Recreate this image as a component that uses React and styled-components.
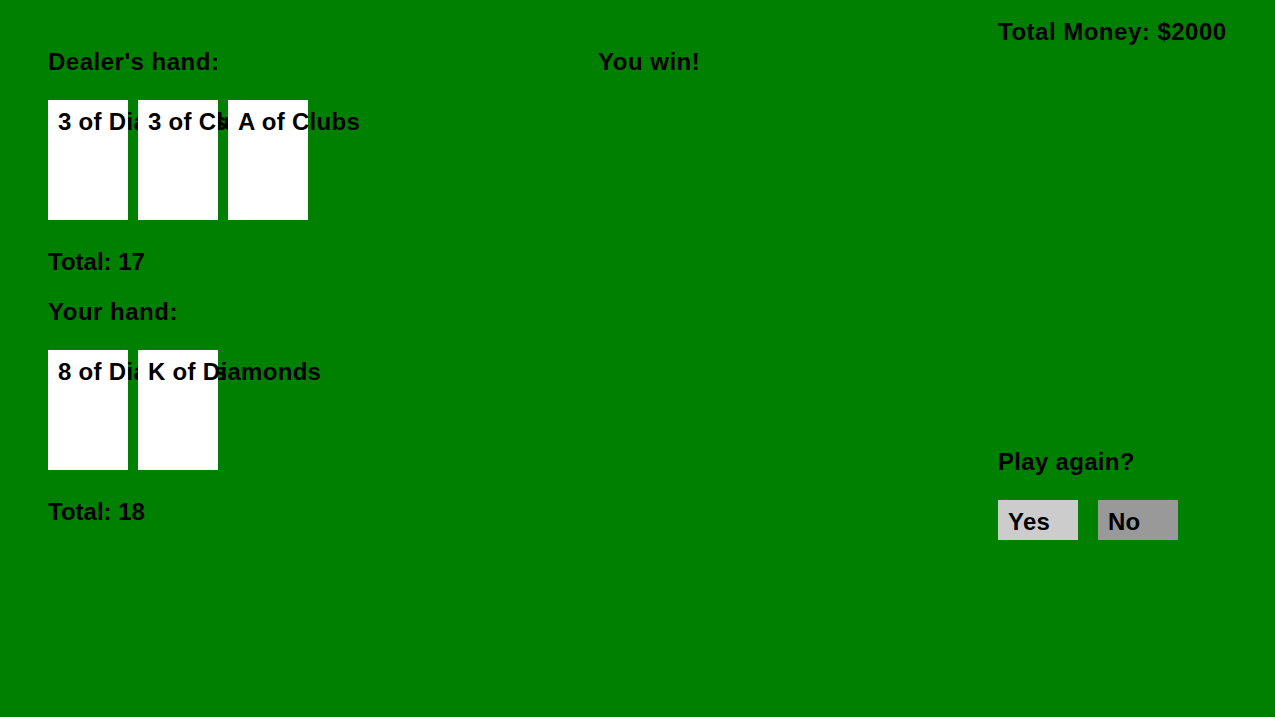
import React from "react";
import styled, { createGlobalStyle } from "styled-components";

const GlobalStyle = createGlobalStyle`
  html, body {
    margin: 0;
    padding: 0;
    background: #008000;
  }
  body {
    font-family: "Liberation Sans", Arial, sans-serif;
    font-weight: bold;
    font-size: 24px;
    letter-spacing: 0.5px;
    color: #000;
  }
`;

const Table = styled.div`
  display: grid;
  grid-template-columns: 550px 400px 1fr;
  padding-left: 48px;
  min-height: 717px;
  box-sizing: border-box;
  background: #008000;
`;

const Column = styled.div`
  padding-top: ${(p) => p.top || 50}px;
  display: flex;
  flex-direction: column;
  align-items: flex-start;
`;

const Line = styled.div`
  line-height: 24px;
  height: 24px;
  margin-top: ${(p) => p.gap || 0}px;
  letter-spacing: ${(p) => (p.spacing !== undefined ? p.spacing : 0.5)}px;
  white-space: nowrap;
`;

const Hand = styled.div`
  display: flex;
  gap: 10px;
  margin-top: 26px;
`;

const Card = styled.div`
  width: 80px;
  height: 120px;
  background: #fff;
  padding: 10px;
  box-sizing: border-box;
  line-height: 24px;
  letter-spacing: 0.3px;
  white-space: nowrap;
`;

const Buttons = styled.div`
  display: flex;
  gap: 20px;
  margin-top: 26px;
`;

const Button = styled.button`
  width: 80px;
  height: 40px;
  padding: 10px;
  box-sizing: border-box;
  border: none;
  background: ${(p) => p.bg};
  font: inherit;
  letter-spacing: 0.2px;
  color: #000;
  line-height: 24px;
  text-align: left;
  display: flex;
  align-items: flex-start;
  cursor: pointer;
`;

const dealer = ["3 of Diamonds", "3 of Clubs", "A of Clubs"];
const player = ["8 of Diamonds", "K of Diamonds"];

export default function App() {
  return (
    <>
      <GlobalStyle />
      <Table>
        <Column>
          <Line>Dealer's hand:</Line>
          <Hand>
            {dealer.map((c) => (
              <Card key={c}>{c}</Card>
            ))}
          </Hand>
          <Line gap={30} spacing={0}>Total: 17</Line>
          <Line gap={26}>Your hand:</Line>
          <Hand>
            {player.map((c) => (
              <Card key={c}>{c}</Card>
            ))}
          </Hand>
          <Line gap={30} spacing={0}>Total: 18</Line>
        </Column>
        <Column>
          <Line>You win!</Line>
        </Column>
        <Column top={20}>
          <Line>Total Money: $2000</Line>
          <Line gap={406} spacing={0.3}>Play again?</Line>
          <Buttons>
            <Button bg="#cccccc">Yes</Button>
            <Button bg="#999999">No</Button>
          </Buttons>
        </Column>
      </Table>
    </>
  );
}
